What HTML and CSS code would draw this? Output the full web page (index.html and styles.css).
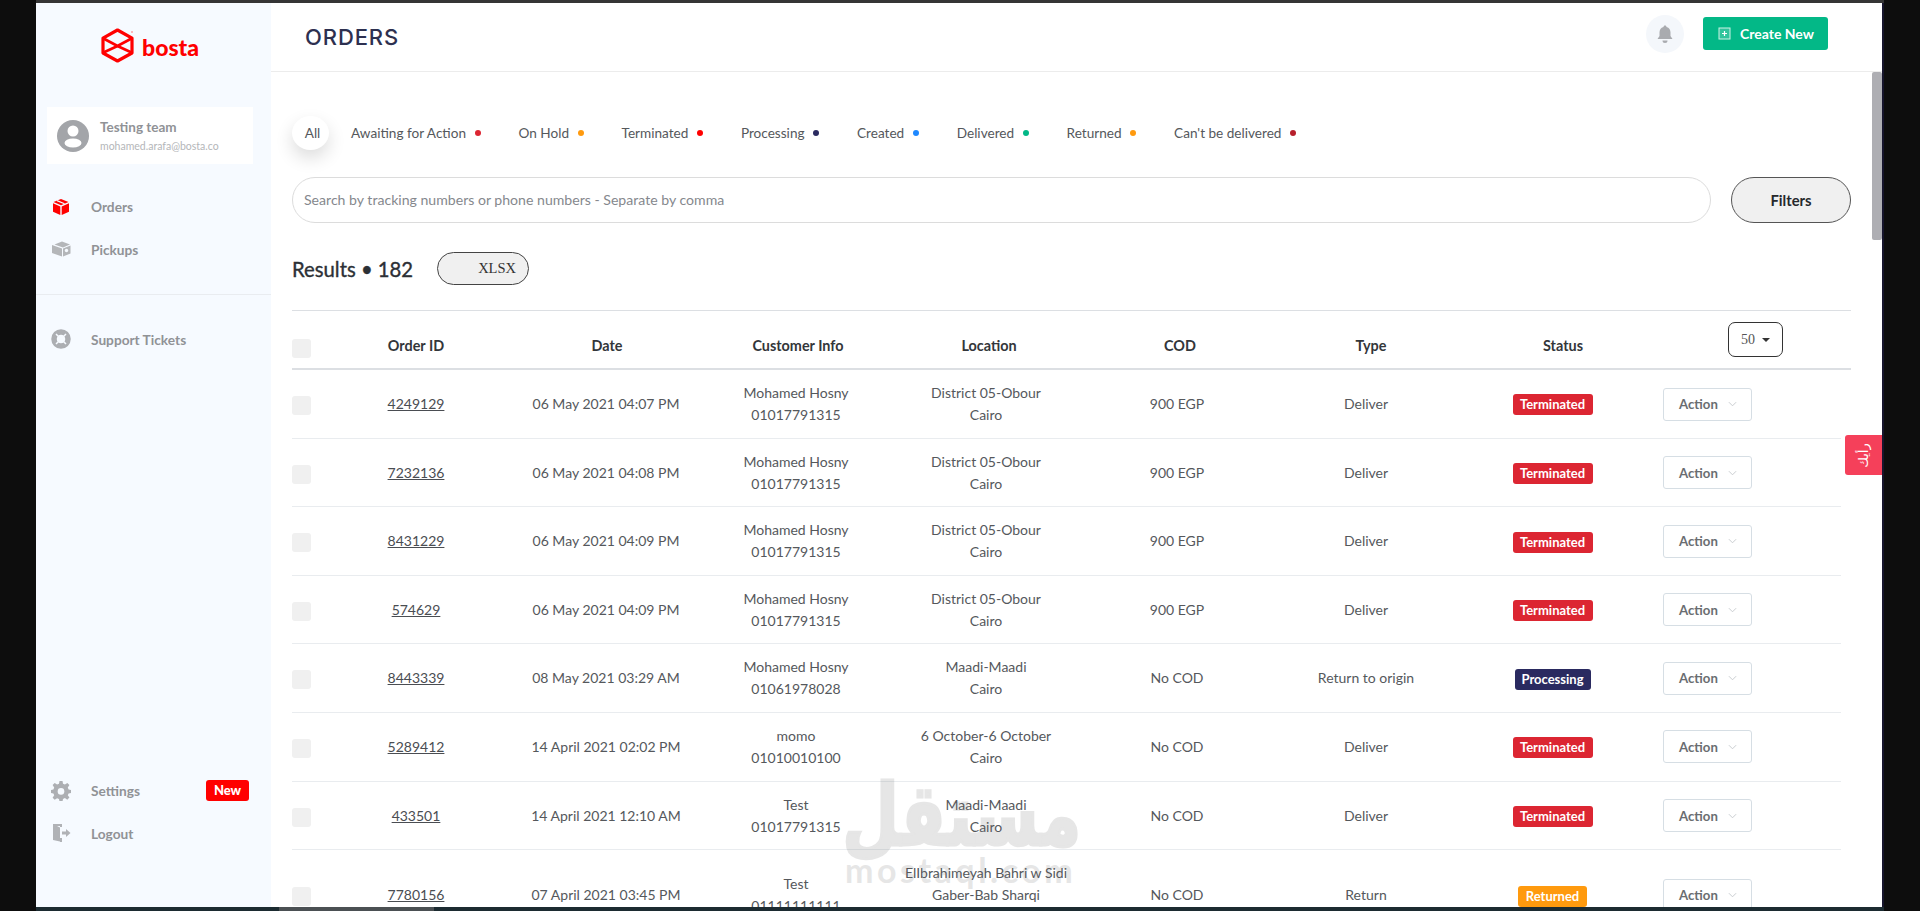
FILE: index.html
```html
<!DOCTYPE html>
<html lang="en">
<head>
<meta charset="utf-8">
<title>Orders - bosta</title>
<link rel="stylesheet" href="styles.css">
</head>
<body>
<div class="strip-top"></div>
<div class="shell">
  <aside class="sidebar">
    <div class="logo">
      <svg class="logo-mark" viewBox="0 0 34 35" width="34" height="35"><path d="M16.5 2 31 10.2V25L16.5 33 2 25V10.2Z" fill="none" stroke="#f00" stroke-width="3.200" stroke-linejoin="round"/><path d="M2.5 10.5 16.5 18 30.500 10.500M2.500 24.500 16.500 18 30.500 24.500" fill="none" stroke="#f00" stroke-width="2.800"/><circle cx="31" cy="4" r=".8" fill="#f66"/></svg>
      <span class="logo-text">bosta</span>
    </div>
    <div class="user-card">
      <svg class="avatar" viewBox="0 0 32 32" width="32" height="32"><circle cx="16" cy="16" r="16" fill="#a3a5a9"/><circle cx="16" cy="11" r="5.500" fill="#fff"/><ellipse cx="16" cy="23" rx="8.500" ry="4.500" fill="#fff"/></svg>
      <div class="user-info">
        <div class="user-name">Testing team</div>
        <div class="user-mail">mohamed.arafa@bosta.co</div>
      </div>
    </div>
    <nav class="nav nav-main">
      <a class="nav-item nav-active">
        <svg class="nav-icon" viewBox="0 0 20 20" width="20" height="20"><path d="M10 2 17.500 5 10 8.300 2.500 5Z" fill="#f00"/><path d="M2 6.300 9.300 9.500V18L2 14.800ZM18 6.300 10.700 9.500V18L18 14.800Z" fill="#f00"/><path d="M6 3.600 13.500 6.800" stroke="#f6faff" stroke-width="1.200"/></svg>
        <span>Orders</span>
      </a>
      <a class="nav-item">
        <svg class="nav-icon" viewBox="0 0 20 20" width="20" height="20"><path d="M11 2.500 19 5.500 12 8.500 3.500 5.500Z" fill="#b4b6b9"/><path d="M1 6 11 9.500V17.500L1 14ZM19.500 6.500 12 9.500V17.500L19.500 14.500Z" fill="#b4b6b9"/><circle cx="15.500" cy="11.500" r="1.700" fill="#f6faff"/></svg>
        <span>Pickups</span>
      </a>
    </nav>
    <div class="nav-divider"></div>
    <nav class="nav nav-support">
      <a class="nav-item">
        <svg class="nav-icon" viewBox="0 0 20 20" width="20" height="20"><circle cx="10" cy="10" r="7" fill="none" stroke="#acaeb2" stroke-width="5.500"/><path d="M5 5 7.500 7.500M15 5 12.500 7.500M5 15 7.500 12.500M15 15 12.500 12.500" stroke="#f6faff" stroke-width="1.500"/></svg>
        <span>Support Tickets</span>
      </a>
    </nav>
    <nav class="nav nav-bottom">
      <a class="nav-item">
        <svg class="nav-icon" viewBox="0 0 20 20" width="20" height="20"><path d="M8.500 0h3l.5 2.800 1.900.8L16.300 2l2.100 2.100-1.600 2.400.8 1.900L20 8.900v3l-2.400.5-.8 1.900 1.600 2.300-2.100 2.100-2.400-1.600-1.900.8-.5 2.500h-3L8 18l-1.900-.8-2.400 1.600L1.600 16.700l1.600-2.400-.8-1.900L0 11.900v-3l2.400-.5.8-1.900L1.600 4.100 3.700 2l2.400 1.600L8 2.800Z" fill="#adafb3"/><circle cx="10" cy="10.400" r="3.300" fill="#f6faff"/></svg>
        <span>Settings</span>
        <b class="new-badge">New</b>
      </a>
      <a class="nav-item">
        <svg class="nav-icon" viewBox="0 0 20 20" width="20" height="20"><path d="M2 1 11 1V4H9V3H6L9 4.500V15H11V19H9V18.500L2 17Z" fill="#b0b2b6"/><path d="M11 8.500H15V6L19.500 10 15 14V11.500H11Z" fill="#b0b2b6"/></svg>
        <span>Logout</span>
      </a>
    </nav>
  </aside>
  <main class="main">
    <header class="topbar">
      <h1 class="page-title">ORDERS</h1>
      <div class="bell">
        <svg viewBox="0 0 20 20" width="20" height="20"><path d="M10 1.500c1 0 1.500.7 1.500 1.500 2.800.8 4 3 4 5.500v3.500l2 3H2.500l2-3V8.500c0-2.500 1.200-4.700 4-5.500 0-.8.500-1.500 1.500-1.500Z" fill="#a9abaf"/><path d="M7.500 16.500a2.500 2.500 0 0 0 5 0Z" fill="#a9abaf"/></svg>
      </div>
      <a class="create-btn">
        <svg viewBox="0 0 14 14" width="14" height="14"><rect x="1" y="2" width="11" height="11" fill="rgba(255,255,255,.18)" stroke="#cdf1e6" stroke-width="1"/><path d="M6.500 5v5M4 7.500h5" stroke="#fff" stroke-width="1.200"/></svg>
        <span>Create New</span>
      </a>
    </header>
    <section class="content">
      <div class="tabs">
        <a class="tab-all">All</a>
        <a class="tab">Awaiting for Action<i class="dot dot-crimson"></i></a>
        <a class="tab">On Hold<i class="dot dot-orange"></i></a>
        <a class="tab">Terminated<i class="dot dot-red"></i></a>
        <a class="tab">Processing<i class="dot dot-navy"></i></a>
        <a class="tab">Created<i class="dot dot-blue"></i></a>
        <a class="tab">Delivered<i class="dot dot-green"></i></a>
        <a class="tab">Returned<i class="dot dot-orange"></i></a>
        <a class="tab">Can't be delivered<i class="dot dot-darkred"></i></a>
      </div>
      <div class="search-row">
        <div class="search-box">Search by tracking numbers or phone numbers - Separate by comma</div>
        <button class="filters-btn">Filters</button>
      </div>
      <div class="results-row">
        <div class="results">Results • 182</div>
        <button class="xlsx-btn">XLSX</button>
      </div>
      <div class="table">
        <div class="thead">
          <span class="check"></span>
          <span>Order ID</span>
          <span>Date</span>
          <span>Customer Info</span>
          <span>Location</span>
          <span>COD</span>
          <span>Type</span>
          <span>Status</span>
          <span class="page-size-cell"><button class="page-size">50<i class="caret"></i></button></span>
        </div>

        <div class="trow">
          <span class="check check-row"></span><a class="order-id">4249129</a><span>06 May 2021 04:07 PM</span>
          <span>Mohamed Hosny<br>01017791315</span><span>District 05-Obour<br>Cairo</span><span>900 EGP</span><span>Deliver</span>
          <span><b class="badge badge-red">Terminated</b></span>
          <span class="action-cell"><a class="action">Action<svg viewBox="0 0 10 6" width="9" height="6"><path d="M1 1l4 4 4-4" fill="none" stroke="#c3c7cb"/></svg></a></span>
        </div>
        <div class="trow">
          <span class="check check-row"></span><a class="order-id">7232136</a><span>06 May 2021 04:08 PM</span>
          <span>Mohamed Hosny<br>01017791315</span><span>District 05-Obour<br>Cairo</span><span>900 EGP</span><span>Deliver</span>
          <span><b class="badge badge-red">Terminated</b></span>
          <span class="action-cell"><a class="action">Action<svg viewBox="0 0 10 6" width="9" height="6"><path d="M1 1l4 4 4-4" fill="none" stroke="#c3c7cb"/></svg></a></span>
        </div>
        <div class="trow">
          <span class="check check-row"></span><a class="order-id">8431229</a><span>06 May 2021 04:09 PM</span>
          <span>Mohamed Hosny<br>01017791315</span><span>District 05-Obour<br>Cairo</span><span>900 EGP</span><span>Deliver</span>
          <span><b class="badge badge-red">Terminated</b></span>
          <span class="action-cell"><a class="action">Action<svg viewBox="0 0 10 6" width="9" height="6"><path d="M1 1l4 4 4-4" fill="none" stroke="#c3c7cb"/></svg></a></span>
        </div>
        <div class="trow">
          <span class="check check-row"></span><a class="order-id">574629</a><span>06 May 2021 04:09 PM</span>
          <span>Mohamed Hosny<br>01017791315</span><span>District 05-Obour<br>Cairo</span><span>900 EGP</span><span>Deliver</span>
          <span><b class="badge badge-red">Terminated</b></span>
          <span class="action-cell"><a class="action">Action<svg viewBox="0 0 10 6" width="9" height="6"><path d="M1 1l4 4 4-4" fill="none" stroke="#c3c7cb"/></svg></a></span>
        </div>
        <div class="trow">
          <span class="check check-row"></span><a class="order-id">8443339</a><span>08 May 2021 03:29 AM</span>
          <span>Mohamed Hosny<br>01061978028</span><span>Maadi-Maadi<br>Cairo</span><span>No COD</span><span>Return to origin</span>
          <span><b class="badge badge-navy">Processing</b></span>
          <span class="action-cell"><a class="action">Action<svg viewBox="0 0 10 6" width="9" height="6"><path d="M1 1l4 4 4-4" fill="none" stroke="#c3c7cb"/></svg></a></span>
        </div>
        <div class="trow">
          <span class="check check-row"></span><a class="order-id">5289412</a><span>14 April 2021 02:02 PM</span>
          <span>momo<br>01010010100</span><span>6 October-6 October<br>Cairo</span><span>No COD</span><span>Deliver</span>
          <span><b class="badge badge-red">Terminated</b></span>
          <span class="action-cell"><a class="action">Action<svg viewBox="0 0 10 6" width="9" height="6"><path d="M1 1l4 4 4-4" fill="none" stroke="#c3c7cb"/></svg></a></span>
        </div>
        <div class="trow">
          <span class="check check-row"></span><a class="order-id">433501</a><span>14 April 2021 12:10 AM</span>
          <span>Test<br>01017791315</span><span>Maadi-Maadi<br>Cairo</span><span>No COD</span><span>Deliver</span>
          <span><b class="badge badge-red">Terminated</b></span>
          <span class="action-cell"><a class="action">Action<svg viewBox="0 0 10 6" width="9" height="6"><path d="M1 1l4 4 4-4" fill="none" stroke="#c3c7cb"/></svg></a></span>
        </div>
        <div class="trow">
          <span class="check check-row"></span><a class="order-id">7780156</a><span>07 April 2021 03:45 PM</span>
          <span>Test<br>01111111111</span><span>ElIbrahimeyah Bahri w Sidi<br>Gaber-Bab Sharqi<br>Cairo</span><span>No COD</span><span>Return</span>
          <span><b class="badge badge-orange">Returned</b></span>
          <span class="action-cell"><a class="action">Action<svg viewBox="0 0 10 6" width="9" height="6"><path d="M1 1l4 4 4-4" fill="none" stroke="#c3c7cb"/></svg></a></span>
        </div>
      </div>
    </section>
    <div class="scroll-thumb"></div>
    <a class="help-tab"><span>رأيك</span></a>
    <div class="watermark">
      <div class="wm-ar" dir="rtl">مستقل</div>
      <div class="wm-en">mostaql.com</div>
    </div>
  </main>
</div>
<div class="strip-bottom"><div class="strip-seg"></div></div>
</body>
</html>
```
FILE: styles.css
```css
* { box-sizing: border-box; }
html, body { margin: 0; height: 911px; overflow: hidden; }
body {
  background: #0d0d0d;
  font-family: "Lato", "Noto Sans", sans-serif;
  font-size: 14px;
  color: #55585c;
  display: flex;
  flex-direction: column;
}
.strip-top { height: 3px; margin-left: 36px; width: 1848px; background: #353535; }
.strip-bottom { height: 4px; margin-left: 36px; width: 1848px; background: #1c2b31; padding-left: 243px; }
.strip-seg { width: 155px; height: 4px; background: #4b5053; }
.shell {
  height: 904px;
  margin-left: 36px;
  width: 1848px;
  display: flex;
  background: #fff;
  border-right: 2px solid #16152c;
  overflow: hidden;
}

/* Sidebar */
.sidebar {
  width: 235px;
  flex: none;
  background: #f6faff;
  display: flex;
  flex-direction: column;
}
.logo { height: 104px; padding: 25px 0 0 65px; display: flex; align-items: flex-start; gap: 7px; }
.logo-mark { flex: none; }
.logo-text { color: #f00; font-weight: 900; font-size: 23px; line-height: 34px; margin-top: 2px; }
.user-card {
  margin: 0 18px 0 11px;
  height: 57px;
  background: #fff;
  display: flex;
  align-items: center;
  padding: 0 10px;
  gap: 11px;
}
.avatar { flex: none; }
.user-name { font-size: 13.500px; font-weight: 700; color: #909296; line-height: 18px; }
.user-mail { font-size: 10.500px; color: #b4b6b9; line-height: 14px; margin-top: 3px; }
.nav { display: flex; flex-direction: column; }
.nav-main { margin-top: 21.500px; gap: 0; }
.nav-item {
  height: 42.500px;
  display: flex;
  align-items: center;
  padding-left: 15px;
  font-size: 13.700px;
  font-weight: 700;
  color: #909296;
  gap: 20px;
}
.nav-icon { flex: none; }
.nav-divider { height: 1px; background: #e9ecf0; margin-top: 23.500px; }
.nav-support { margin-top: 23px; }
.nav-bottom { margin-top: auto; margin-bottom: 52.500px; }
.new-badge {
  margin-left: auto;
  margin-right: 22px;
  width: 43px;
  height: 21px;
  background: #f00;
  color: #fff;
  font-size: 13px;
  font-weight: 900;
  line-height: 20px;
  text-align: center;
  border-radius: 3px;
}

/* Main */
.main { flex: 1; position: relative; min-width: 0; background: #fff; }
.topbar {
  height: 69px;
  border-bottom: 1px solid #ececec;
  display: flex;
  align-items: center;
  padding: 0 54px 2px 34px;
}
.page-title {
  margin: 2px 0 0;
  font-family: "Inter", "Open Sans", sans-serif;
  font-size: 22px;
  font-weight: 500;
  color: #2d3050;
  letter-spacing: .9px;
}
.bell {
  margin: -5px 0 0 auto;
  width: 38px;
  height: 38px;
  border-radius: 50%;
  background: #f4f7fb;
  display: flex;
  align-items: center;
  justify-content: center;
}
.create-btn {
  margin: -6px 0 0 19px;
  width: 125px;
  height: 33px;
  background: #03b887;
  border-radius: 3px;
  color: #fff;
  font-size: 14px;
  font-weight: 700;
  display: flex;
  align-items: center;
  padding-left: 15px;
  gap: 8px;
}
.content { padding: 44px 31px 0 21px; }

.tabs { display: flex; align-items: center; height: 34px; color: #55585c; font-size: 13.600px; }
.tab-all {
  width: 37px;
  height: 34px;
  border-radius: 50%;
  background: #fff;
  box-shadow: 0 8px 18px rgba(0, 0, 0, .14);
  display: flex;
  align-items: center;
  justify-content: center;
  padding-left: 4px;
  margin-right: 22px;
}
.tab { display: flex; align-items: center; margin-right: 38px; white-space: nowrap; }
.dot { width: 6px; height: 6px; border-radius: 50%; margin-left: 8.500px; }
.dot-crimson { background: #dc2632; }
.dot-orange { background: #ff9a0e; }
.dot-red { background: #f00; }
.dot-navy { background: #2a2a60; }
.dot-blue { background: #1e88ff; }
.dot-green { background: #03b887; }
.dot-darkred { background: #b7202c; }

.search-row { display: flex; margin-top: 27px; gap: 20px; }
.search-box {
  flex: 1;
  height: 46px;
  border: 1px solid #dcdcdc;
  border-radius: 23px;
  padding-left: 11px;
  line-height: 44px;
  color: #85888d;
  font-size: 14.100px;
}
.filters-btn {
  width: 120px;
  height: 46px;
  border: 1.500px solid #555;
  border-radius: 23px;
  background: #f0f0f0;
  font-family: inherit;
  font-size: 14.800px;
  font-weight: 700;
  color: #26282c;
  padding: 0;
}
.results-row { display: flex; align-items: center; margin-top: 29px; height: 33px; gap: 24px; }
.results { width: 121px; font-size: 20.300px; color: #2c3036; -webkit-text-stroke: .35px #2c3036; white-space: nowrap; }
.xlsx-btn {
  width: 92px;
  height: 33px;
  border: 1.200px solid #444;
  border-radius: 17px;
  background: #f0f0f0;
  font-family: "Liberation Serif", serif;
  font-size: 14.500px;
  color: #333;
  text-align: right;
  padding: 0 12px 0 0;
}

/* Table */
.table { margin-top: 25px; }
.thead {
  display: grid;
  grid-template-columns: 29px 190px 192px 190px 192px 190px 192px 192px 1fr;
  text-align: center;
  height: 60px;
  border-top: 1px solid #dcdfe3;
  border-bottom: 2px solid #dcdfe3;
  align-items: end;
  padding-bottom: 11px;
  font-size: 14.400px;
  font-weight: 700;
  color: #33363a;
  line-height: 22px;
}
.thead .check { margin-bottom: -1px; }
.trow {
  display: grid;
  grid-template-columns: 29px 190px 190px 190px 190px 192px 186px 187px 1fr;
  text-align: center;
  width: 1549px;
  align-items: center;
  padding: 12px 0 11.600px;
  border-bottom: 1px solid #e9ecef;
  line-height: 22px;
}
.check { display: block; width: 19px; height: 19px; background: #f0f0f0; border-radius: 3px; }
.check-row { margin-top: 3px; }
.order-id { text-decoration: underline; color: #4a4d52; }
.page-size-cell { text-align: left; }
.page-size {
  margin-left: 69px;
  width: 55px;
  height: 35px;
  border: 1px solid #333;
  border-radius: 7px;
  background: #fff;
  font-family: "Liberation Serif", serif;
  font-size: 14px;
  color: #555;
  display: flex;
  align-items: center;
  justify-content: center;
  gap: 7px;
  padding: 0;
}
.caret { width: 0; height: 0; border: 4px solid transparent; border-top: 4px solid #333; border-bottom: 0; }
.badge {
  display: inline-block;
  height: 21px;
  line-height: 20px;
  font-size: 13px;
  font-weight: 700;
  color: #fff;
  border-radius: 3px;
  vertical-align: middle;
}
.badge-red { width: 80px; background: #dc2632; }
.badge-navy { width: 76px; background: #2a2a60; }
.badge-orange { width: 69px; background: #ff9a0e; }
.action-cell { text-align: left; padding-left: 17px; }
.action {
  width: 89px;
  height: 33px;
  border: 1px solid #d6dee4;
  border-radius: 3px;
  display: flex;
  align-items: center;
  padding-left: 15px;
  gap: 10px;
  font-weight: 700;
  font-size: 13.200px;
  color: #6a6d71;
}

/* Overlays */
.scroll-thumb {
  position: absolute;
  right: 0;
  top: 69px;
  width: 10px;
  height: 168px;
  background: #aeaeb3;
  border-radius: 2px;
}
.help-tab {
  position: absolute;
  right: 0;
  top: 432px;
  width: 37px;
  height: 40px;
  background: #f5405a;
  border-radius: 3px 0 0 3px;
  display: flex;
  align-items: center;
  justify-content: center;
  color: #fff;
  font-family: "DejaVu Sans", sans-serif;
  font-size: 13px;
}
.help-tab span { display: block; transform: rotate(-90deg); }
.watermark {
  position: absolute;
  left: 574px;
  top: 756px;
  width: 231px;
  text-align: center;
  color: #6e6e6e;
  opacity: .17;
  pointer-events: none;
}
.wm-ar {
  font-family: "DejaVu Sans", sans-serif;
  font-weight: 700;
  font-size: 86px;
  line-height: 96px;
  white-space: nowrap;
  transform: translate(33px, 8px) scaleX(.76);
  -webkit-text-stroke: 3px #6e6e6e;
}
.wm-en { font-weight: 700; font-size: 34px; line-height: 36px; letter-spacing: 3.500px; white-space: nowrap; margin-top: -3px; }
```
